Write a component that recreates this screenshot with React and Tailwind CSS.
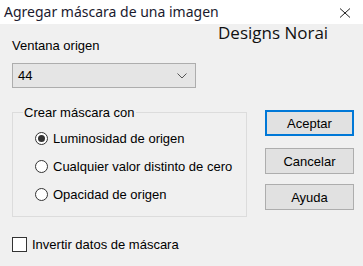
import React, { useState } from 'react';

const options = [
  'Luminosidad de origen',
  'Cualquier valor distinto de cero',
  'Opacidad de origen',
];

function Radio({ checked, label, onClick }) {
  return (
    <div onClick={onClick} className="flex items-center h-[28px] cursor-default">
      <span className="w-[13px] h-[13px] rounded-full border border-[#333] bg-white flex items-center justify-center">
        {checked && <span className="w-[7px] h-[7px] rounded-full bg-[#333]" />}
      </span>
      <span className="ml-[5px]">{label}</span>
    </div>
  );
}

export default function App() {
  const [mode, setMode] = useState(0);
  const [invert, setInvert] = useState(false);

  return (
    <div
      className="w-[363px] h-[266px] bg-[#f0f0f0] flex flex-col relative overflow-hidden text-[13px] leading-[15px] text-black"
      style={{ fontFamily: '"Liberation Sans", Arial, sans-serif' }}
    >
      {/* Title bar */}
      <div className="h-[24px] bg-white flex items-center justify-between pl-[4px] pr-[12px]">
        <span className="text-[14px] text-[#1a1a2e] leading-[20px]" style={{ fontFamily: '"Noto Sans", sans-serif' }}>
          Agregar máscara de una imagen
        </span>
        <svg width="12" height="10" viewBox="0 0 12 10" className="mt-[2px]">
          <path d="M1 0.5 L11 9.5 M11 0.5 L1 9.5" stroke="#222" strokeWidth="1" fill="none" />
        </svg>
      </div>

      {/* Watermark */}
      <span
        className="absolute left-[218px] top-[23px] text-[17px] leading-[20px] text-[#111]"
        style={{ fontFamily: '"Open Sans", sans-serif' }}
      >
        Designs Norai
      </span>

      <div className="flex pl-[12px]">
        {/* Left column */}
        <div className="w-[235px] flex flex-col pt-[14px]">
          <span>Ventana origen</span>
          <div className="mt-[10px] w-[184px] h-[25px] border border-[#adadad] bg-[#e5e5e5] flex items-center justify-between pl-[5px] pr-[8px]">
            <span>44</span>
            <svg width="10" height="6" viewBox="0 0 10 6">
              <path d="M0.5 0.5 L5 5 L9.5 0.5" stroke="#555" strokeWidth="1" fill="none" />
            </svg>
          </div>

          <fieldset className="mt-[17px] border border-[#dcdcdc] h-[112px] pl-[22px] pt-[4px]">
            <legend className="ml-[-12px] px-[1px]">Crear máscara con</legend>
            {options.map((o, i) => (
              <Radio key={o} label={o} checked={mode === i} onClick={() => setMode(i)} />
            ))}
          </fieldset>

          <div onClick={() => setInvert(!invert)} className="mt-[20px] flex items-center">
            <span className="w-[15px] h-[15px] border border-[#333] bg-white flex items-center justify-center">
              {invert && (
                <svg width="11" height="9" viewBox="0 0 11 9">
                  <path d="M1 4.5 L4 7.5 L10 1" stroke="#333" strokeWidth="1.5" fill="none" />
                </svg>
              )}
            </span>
            <span className="ml-[5px]">Invertir datos de máscara</span>
          </div>
        </div>

        {/* Buttons */}
        <div className="ml-[18px] pt-[86px] flex flex-col">
          <button className="w-[89px] h-[26px] border-2 border-[#0078d7] bg-[#e1e1e1]">Aceptar</button>
          <button className="mt-[12px] w-[89px] h-[26px] border border-[#adadad] bg-[#e1e1e1]">Cancelar</button>
          <button className="mt-[10px] w-[89px] h-[26px] border border-[#adadad] bg-[#e1e1e1]">Ayuda</button>
        </div>
      </div>
    </div>
  );
}
